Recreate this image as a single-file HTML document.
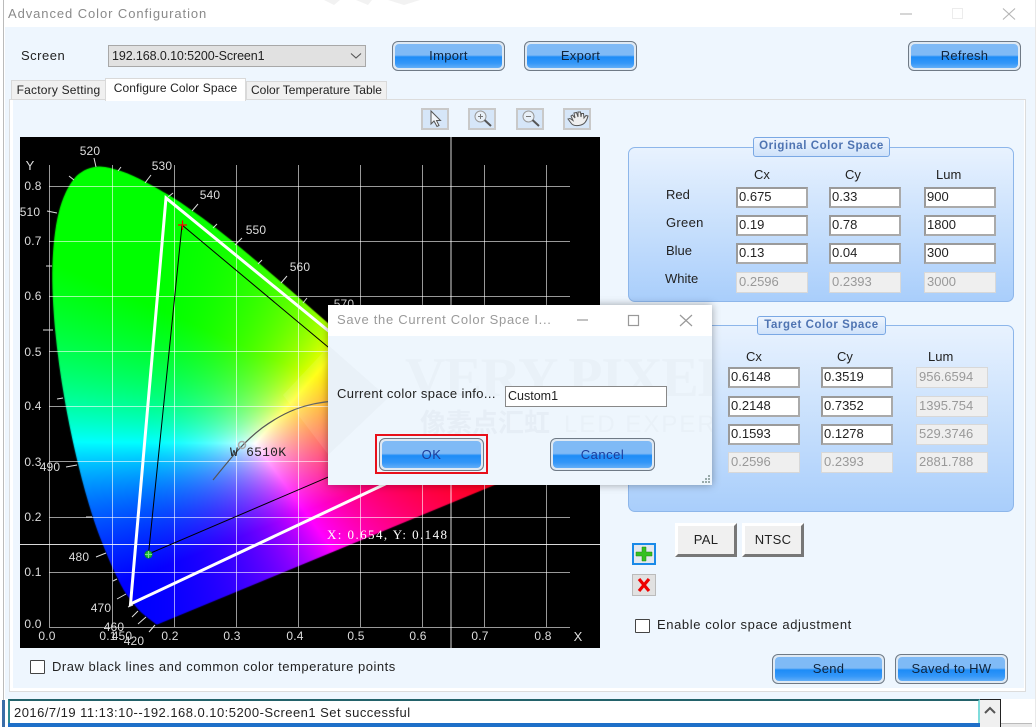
<!DOCTYPE html>
<html><head><meta charset="utf-8">
<style>
html,body{margin:0;padding:0;background:#fff}
#p{position:relative;width:1036px;height:727px;overflow:hidden;background:#fff;font-family:"Liberation Sans",sans-serif;font-size:13px;color:#222}
#p div,#p span.a{position:absolute;box-sizing:border-box}
.t{white-space:nowrap;line-height:16px;height:16px}
.b{border:1px solid #6f7a86;border-radius:6px;background:#dfe9f3;padding:0;text-align:center;color:#10243c;white-space:nowrap}
.b i{position:absolute;left:2px;right:2px;top:2px;bottom:2px;border-radius:4px;background:linear-gradient(#7fbaf6 0,#7fbaf6 46%,#1d8cf7 54%,#3497f8 80%,#63aef8 100%)}
.b span{position:relative;line-height:27px;display:block;letter-spacing:.3px}
.f{border:2px solid #9a9a9a;border-right-color:#aaa;border-bottom-color:#aaa;background:#fff;font-size:13px;line-height:16px;padding-left:1px;width:72px;height:21px;color:#222}
.d{border:1px solid #d8d8d8;background:#efefef;color:#999;font-size:13px;line-height:17px;padding-left:2px;width:72px;height:21px}
.g{border:1px solid #8db6ea;border-radius:7px;background:linear-gradient(#e8f2fe,#a9cefb)}
.lg{border:1px solid #7aa8e4;border-radius:3px;background:linear-gradient(#eef5fe,#cfe2fa);color:#4f74b2;font-weight:bold;font-size:11.5px;text-align:center;letter-spacing:.55px;line-height:17px}
.ib{background:#d6e6f8;border:2px solid #c9c9c9;width:28px;height:22px}
.pb{border:3px solid;border-color:#fff #777 #777 #fff;background:#f0f0f0;text-align:center;line-height:27px;color:#222;letter-spacing:.3px}
.cb{border:1px solid #444;background:#fff;border-radius:1px}
</style></head>
<body><div id="p">
<!-- window chrome -->
<div style="left:3px;top:0;width:1px;height:700px;background:#bbb"></div>
<div style="left:5px;top:27px;width:1030px;height:672px;background:#eef6fe"></div>
<div style="left:1035px;top:0;width:1px;height:727px;background:#e8e8e8"></div>
<div class="t" style="left:8px;top:6px;color:#8a8a8a;letter-spacing:.92px">Advanced Color Configuration</div>
<svg style="position:absolute;left:890px;top:0" width="140" height="27" fill="none">
<path d="M10 14H22" stroke="#bbb" stroke-width="1.200"/>
<rect x="62.500" y="8.500" width="10" height="10" stroke="#ececec"/>
<path d="M113 8.500L125 19.500M125 8.500L113 19.500" stroke="#b4b4b4" stroke-width="1.100"/>
</svg>
<svg style="position:absolute;left:316px;top:0" width="110" height="6"><path d="M8 0L18 5L24 0ZM40 0L52 5L56 0ZM72 0L88 5L104 0Z" fill="#f2f2f2"/></svg>

<div class="t" style="left:21px;top:48px;letter-spacing:.5px">Screen</div>
<div style="left:108px;top:45px;width:258px;height:22px;background:#e1e1e1;border:1px solid #a8a8a8;line-height:20px;padding-left:3px;letter-spacing:-.1px;font-size:12.5px">192.168.0.10:5200-Screen1</div>
<svg style="position:absolute;left:350px;top:52px" width="12" height="8" fill="none"><path d="M1 1.500L6 6L11 1.500" stroke="#555" stroke-width="1.100"/></svg>
<div class="b" style="left:392px;top:41px;width:113px;height:30px"><i></i><span>Import</span></div>
<div class="b" style="left:524px;top:41px;width:113px;height:30px"><i></i><span>Export</span></div>
<div class="b" style="left:908px;top:41px;width:113px;height:30px"><i></i><span>Refresh</span></div>

<!-- tabs -->
<div style="left:9px;top:99px;width:1017px;height:593px;border:1px solid #dcdcdc;background:#eef6fe;box-shadow:inset 3px 0 0 #fff,inset -1px -3px 0 #fff"></div>
<div style="left:11px;top:80px;width:95px;height:20px;background:#f0f0f0;border:1px solid #d9d9d9;font-size:12px;text-align:center;line-height:18px;white-space:nowrap;letter-spacing:.2px">Factory Setting</div>
<div style="left:246px;top:81px;width:141px;height:19px;background:#f0f0f0;border:1px solid #d9d9d9;font-size:12px;text-align:center;line-height:17px;white-space:nowrap">Color Temperature Table</div>
<div style="left:105px;top:78px;width:141px;height:23px;background:#fff;border:1px solid #d9d9d9;border-bottom:0;font-size:12px;text-align:center;line-height:18px;white-space:nowrap;letter-spacing:.1px">Configure Color Space</div>

<!-- toolbar -->
<div class="ib" style="left:421px;top:108px"></div>
<div class="ib" style="left:468px;top:108px"></div>
<div class="ib" style="left:516px;top:108px"></div>
<div class="ib" style="left:563px;top:108px"></div>
<svg style="position:absolute;left:421px;top:108px" width="172" height="22" fill="none">
<path d="M10 3V16L13 13L16 18.500L18 17.500L15.500 12.500L19.500 12.500Z" fill="#f4f8fc" stroke="#555" stroke-width="1"/>
<circle cx="59.500" cy="8.500" r="5.500" fill="#e8f0f8" stroke="#999"/><path d="M57 8.500H62M59.500 6V11" stroke="#777"/><path d="M63.500 12L70 18" stroke="#555" stroke-width="2"/>
<circle cx="107.500" cy="8.500" r="5.500" fill="#e8f0f8" stroke="#999"/><path d="M105 8.500H110" stroke="#777"/><path d="M111.500 12L118 18" stroke="#555" stroke-width="2"/>
<path d="M147 11L150 15C152 18 156 18 160 17C164 16 166 12 167 8L165 7.500L163 10L162.500 5.500L160.500 5.500L160 9L159.500 4L157 4L157 9L155.500 4.500L153 5L154 10L151.500 7L150 8L152 12.500L149 10.500Z" fill="#efefef" stroke="#555"/>
</svg>

<!-- chart -->
<canvas id="c" width="580" height="511" style="position:absolute;left:20px;top:137px;background:#000"></canvas>
<svg style="position:absolute;left:20px;top:137px" width="580" height="511" viewBox="20 137 580 511" font-family="Liberation Sans, sans-serif" font-size="12" fill="#ddd">
<g stroke="#fff" stroke-opacity=".6" stroke-width="1" fill="none">
<path d="M49.500 165V627.500H570M112.500 165V627M174.500 165V627M236.500 165V627M298.500 165V627M360.500 165V627M422.500 165V627M484.500 165V627M546.500 165V627"/>
<path d="M49 186.500H570M49 241.500H570M49 296.500H570M49 351.500H570M49 406.500H570M49 461.500H570M49 517.500H570M49 572.500H570"/>
</g>
<path d="M451 137V648M20 544.500H600" stroke="#fff" stroke-opacity=".85" fill="none"/>
<g stroke="#ddd" stroke-width="1" fill="none">
<path d="M94 158L96 167M151 175L145 183M198 204L192 211M242 238L235 245M287 276L281 283M47 211L57 213M121 167L118 171M69 176L74 180M173 193L168 197M217 224L213 228M262 260L258 264M307 298L303 303M46 266L52 266M43 330L53 330M57 399L63 398M66 467L77 465M86 517L92 517M96 557L106 553M113 581L117 579M117 599L126 594M128 607L133 605M132 617L138 611M138 624L146 617M149 632L155 625"/>
</g>
<g text-anchor="middle" letter-spacing=".2">
<text x="90" y="155">520</text><text x="162" y="170">530</text><text x="210" y="199">540</text><text x="256" y="234">550</text><text x="300" y="271">560</text><text x="344" y="308">570</text>
<text x="30" y="216">510</text><text x="50" y="471">490</text><text x="79" y="561">480</text><text x="101" y="612">470</text><text x="114" y="631">460</text><text x="122" y="640">450</text><text x="134" y="645">420</text>
<text x="33" y="190">0.8</text><text x="33" y="245">0.7</text><text x="33" y="300">0.6</text><text x="33" y="356">0.5</text><text x="33" y="410">0.4</text><text x="33" y="466">0.3</text><text x="33" y="521">0.2</text><text x="33" y="576">0.1</text><text x="33" y="628">0.0</text>
<text x="30" y="170" font-size="13">Y</text>
<text x="47" y="640">0.0</text><text x="108" y="640">0.1</text><text x="170" y="640">0.2</text><text x="232" y="640">0.3</text><text x="295" y="640">0.4</text><text x="356" y="640">0.5</text><text x="418" y="640">0.6</text><text x="480" y="640">0.7</text><text x="543" y="640">0.8</text>
<text x="578" y="641" font-size="13">X</text>
</g>
<path d="M166 198L130.500 604L468 445Z" fill="none" stroke="#fff" stroke-width="3"/>
<path d="M182 225L148.500 554L431 433Z" fill="none" stroke="#000" stroke-width="1"/>
<path d="M213 480C228 462 240 445 262 428C284 412 305 403 335 401" fill="none" stroke="#555" stroke-width="1.200"/>
<circle cx="242" cy="445" r="3.500" fill="none" stroke="#aaa" stroke-width="1.500"/>
<path d="M178 225H187M182.500 220.500V230" stroke="#f00" stroke-width="1.200"/>
<circle cx="148.500" cy="554.500" r="3.500" fill="#17c03a" stroke="#0a8a28"/><path d="M145 554.500H152M148.500 551V558" stroke="#7fe07f" stroke-width="1"/>
<text x="230" y="456" font-family="Liberation Mono, monospace" font-size="13" fill="#222" textLength="56">W 6510K</text>
<text x="327" y="539" font-family="Liberation Serif, serif" font-size="13" fill="#fff" textLength="120">X: 0.654, Y: 0.148</text>
<path d="M283 395L330 345L420 395L340 470Z" fill="#fff" opacity=".1"/>
</svg>

<div class="cb" style="left:30px;top:660px;width:15px;height:14px"></div>
<div class="t" style="left:52px;top:659px;letter-spacing:.51px">Draw black lines and common color temperature points</div>

<!-- Original -->
<div class="g" style="left:628px;top:147px;width:386px;height:155px"></div>
<div class="lg" style="left:753px;top:137px;width:137px;height:20px">Original Color Space</div>
<div class="t" style="left:754px;top:167px">Cx</div><div class="t" style="left:845px;top:167px">Cy</div><div class="t" style="left:936px;top:167px">Lum</div>
<div class="t" style="left:666px;top:187px">Red</div><div class="t" style="left:666px;top:215px;letter-spacing:.3px">Green</div><div class="t" style="left:666px;top:243px">Blue</div><div class="t" style="left:665px;top:271px">White</div>
<div class="f" style="left:736px;top:187px">0.675</div><div class="f" style="left:829px;top:187px">0.33</div><div class="f" style="left:924px;top:187px">900</div>
<div class="f" style="left:736px;top:215px">0.19</div><div class="f" style="left:829px;top:215px">0.78</div><div class="f" style="left:924px;top:215px">1800</div>
<div class="f" style="left:736px;top:243px">0.13</div><div class="f" style="left:829px;top:243px">0.04</div><div class="f" style="left:924px;top:243px">300</div>
<div class="d" style="left:736px;top:272px">0.2596</div><div class="d" style="left:829px;top:272px">0.2393</div><div class="d" style="left:924px;top:272px">3000</div>

<!-- Target -->
<div class="g" style="left:628px;top:325px;width:386px;height:187px"></div>
<div class="lg" style="left:757px;top:316px;width:129px;height:19px">Target Color Space</div>
<div class="t" style="left:746px;top:349px">Cx</div><div class="t" style="left:837px;top:349px">Cy</div><div class="t" style="left:928px;top:349px">Lum</div>
<div class="f" style="left:728px;top:367px">0.6148</div><div class="f" style="left:821px;top:367px">0.3519</div><div class="d" style="left:916px;top:367px">956.6594</div>
<div class="f" style="left:728px;top:396px">0.2148</div><div class="f" style="left:821px;top:396px">0.7352</div><div class="d" style="left:916px;top:396px">1395.754</div>
<div class="f" style="left:728px;top:424px">0.1593</div><div class="f" style="left:821px;top:424px">0.1278</div><div class="d" style="left:916px;top:424px">529.3746</div>
<div class="d" style="left:728px;top:452px">0.2596</div><div class="d" style="left:821px;top:452px">0.2393</div><div class="d" style="left:916px;top:452px">2881.788</div>

<div class="pb" style="left:675px;top:523px;width:62px;height:34px">PAL</div>
<div class="pb" style="left:742px;top:523px;width:62px;height:34px">NTSC</div>
<div style="left:632px;top:543px;width:24px;height:22px;border:2px solid #1a8ae8;background:#e4e8ee"></div>
<svg style="position:absolute;left:632px;top:543px" width="24" height="22"><path d="M10 4H14V9H20V13H14V18H10V13H4V9H10Z" fill="#35c020" stroke="#1f8a12" stroke-width=".5"/></svg>
<div style="left:632px;top:574px;width:24px;height:22px;border:1px solid #bbb;background:#e1e1e1"></div>
<svg style="position:absolute;left:632px;top:574px" width="24" height="22"><path d="M7 5L17 17M17 5L7 17" stroke="#ee0000" stroke-width="3.200"/></svg>
<div class="cb" style="left:635px;top:619px;width:15px;height:14px"></div>
<div class="t" style="left:657px;top:617px;letter-spacing:.59px">Enable color space adjustment</div>
<div class="b" style="left:772px;top:654px;width:113px;height:30px"><i></i><span>Send</span></div>
<div class="b" style="left:895px;top:654px;width:113px;height:30px"><i></i><span>Saved to HW</span></div>

<!-- log -->
<div style="left:8px;top:699px;width:972px;height:28px;background:#fff;border:2px solid #2e8a90;border-top-color:#23626a;border-right-color:#7fdcdc;border-bottom:0"></div>
<div style="left:8px;top:723px;width:972px;height:4px;background:#1e6fc8"></div>
<div class="t" style="left:14px;top:705px;letter-spacing:.47px">2016/7/19 11:13:10--192.168.0.10:5200-Screen1 Set successful</div>
<div style="left:980px;top:699px;width:21px;height:28px;background:#f0f0f0;border:1px solid #222;border-left:0;border-bottom:0"></div>
<svg style="position:absolute;left:980px;top:704px" width="20" height="12" fill="none"><path d="M5 9L10 4L15 9" stroke="#555" stroke-width="2"/></svg>
<div style="left:1001px;top:723px;width:31px;height:4px;background:#e8e8e8;border-top:1px solid #bbb"></div>
<div style="left:2px;top:700px;width:3px;height:27px;background:#3a6ea8"></div>

<!-- dialog -->
<div style="left:328px;top:305px;width:384px;height:180px;background:#eef6fd;box-shadow:0 0 8px rgba(0,0,0,.35);overflow:hidden">
  <div style="left:0;top:0;width:384px;height:31px;background:#fff"></div>
  <svg style="position:absolute;left:0;top:31px" width="384" height="149" viewBox="328 336 384 149">
  <path d="M328 345L388 398L328 455Z" fill="#e9f1f8"/>
  <text x="405" y="396" font-family="Liberation Serif, serif" font-weight="bold" font-size="56" fill="#e9f1f8" textLength="330">VERY PIXEL</text>
  <text x="420" y="432" font-family="Liberation Sans, Noto Sans CJK SC, sans-serif" font-weight="bold" font-size="26" fill="#e6eef6">像素点汇虹</text>
  <text x="564" y="432" font-family="Liberation Sans, sans-serif" font-size="24" fill="#e9f1f8" letter-spacing="2">LED EXPERT</text>
  </svg>
</div>
<div class="t" style="left:337px;top:312px;color:#9a9a9a;letter-spacing:.7px">Save the Current Color Space I...</div>
<svg style="position:absolute;left:570px;top:308px" width="130" height="24" fill="none">
<path d="M7 12H18" stroke="#999" stroke-width="1.200"/><rect x="58.500" y="7.500" width="10" height="10" stroke="#999" stroke-width="1.200"/><path d="M110 7L122 18M122 7L110 18" stroke="#999" stroke-width="1.200"/>
</svg>
<div class="t" style="left:337px;top:386px;letter-spacing:.37px">Current color space info...</div>
<div style="left:505px;top:386px;width:162px;height:21px;background:#fff;border:1px solid #888;font-size:12.500px;line-height:19px;padding-left:2px">Custom1</div>
<div style="left:375px;top:434px;width:113px;height:40px;border:2px solid #e8101a"></div>
<div class="b" style="left:379px;top:438px;width:105px;height:33px;color:#1d3c9a"><i></i><span style="line-height:31px;letter-spacing:.5px">OK</span></div>
<div class="b" style="left:550px;top:438px;width:105px;height:33px;color:#1d3c9a"><i></i><span style="line-height:31px;letter-spacing:.5px">Cancel</span></div>
<svg style="position:absolute;left:700px;top:474px" width="12" height="10" fill="#9aa"><rect x="8" y="1" width="2" height="2"/><rect x="5" y="4" width="2" height="2"/><rect x="8" y="4" width="2" height="2"/><rect x="2" y="7" width="2" height="2"/><rect x="5" y="7" width="2" height="2"/><rect x="8" y="7" width="2" height="2"/></svg>

<script>
(function(){
var L=[[.1741,.005],[.1714,.0051],[.1644,.0109],[.1566,.0177],[.144,.0297],[.1241,.0578],[.1096,.0868],[.0913,.1327],[.0687,.2007],[.0454,.295],[.0235,.4127],[.0082,.5384],[.0039,.6548],[.0139,.7502],[.0389,.812],[.0743,.8338],[.1142,.8262],[.1547,.8059],[.1929,.7816],[.2296,.7543],[.2658,.7243],[.3016,.6923],[.3373,.6589],[.3731,.6245],[.4087,.5896],[.4441,.5547],[.4788,.5202],[.5125,.4866],[.5448,.4544],[.5752,.4242],[.6029,.3965],[.627,.3725],[.6658,.334],[.6915,.3083],[.7079,.292],[.7347,.2653]];
var W=580,H=511,cv=document.getElementById('c'),ctx=cv.getContext('2d');
var o=document.createElement('canvas');o.width=W;o.height=H;var oc=o.getContext('2d'),im=oc.createImageData(W,H),d=im.data;
var Rx=.68,Ry=.33,Gx=.17,Gy=.58,Bx=.14,By=.09;
var det=(Gy-By)*(Rx-Bx)+(Bx-Gx)*(Ry-By);
for(var j=0;j<H;j++)for(var i=0;i<W;i++){
 var x=(i+20-50)/620,y=(627-(j+137))/552;
 var r=((Gy-By)*(x-Bx)+(Bx-Gx)*(y-By))/det;
 var g=((By-Ry)*(x-Bx)+(Rx-Bx)*(y-By))/det;
 var b=1-r-g;
 r=Math.max(r,0);g=Math.max(g,0);b=Math.max(b,0);
 var m=Math.max(r,g,b)||1,k=(i+j*W)*4;
 d[k]=255*Math.pow(r/m,1.5);d[k+1]=255*g/m;d[k+2]=255*b/m;d[k+3]=255;
}
oc.putImageData(im,0,0);
ctx.fillStyle='#000';ctx.fillRect(0,0,W,H);
var P=L.map(function(q){return [50+620*q[0]-20,627-552*q[1]-137];});
ctx.beginPath();ctx.moveTo(P[0][0],P[0][1]);
for(var n=0;n<P.length-1;n++){
 var p0=P[Math.max(n-1,0)],p1=P[n],p2=P[n+1],p3=P[Math.min(n+2,P.length-1)];
 ctx.bezierCurveTo(p1[0]+(p2[0]-p0[0])/6,p1[1]+(p2[1]-p0[1])/6,p2[0]-(p3[0]-p1[0])/6,p2[1]-(p3[1]-p1[1])/6,p2[0],p2[1]);
}
ctx.closePath();ctx.clip();ctx.drawImage(o,0,0);
})();
</script>
</div></body></html>
